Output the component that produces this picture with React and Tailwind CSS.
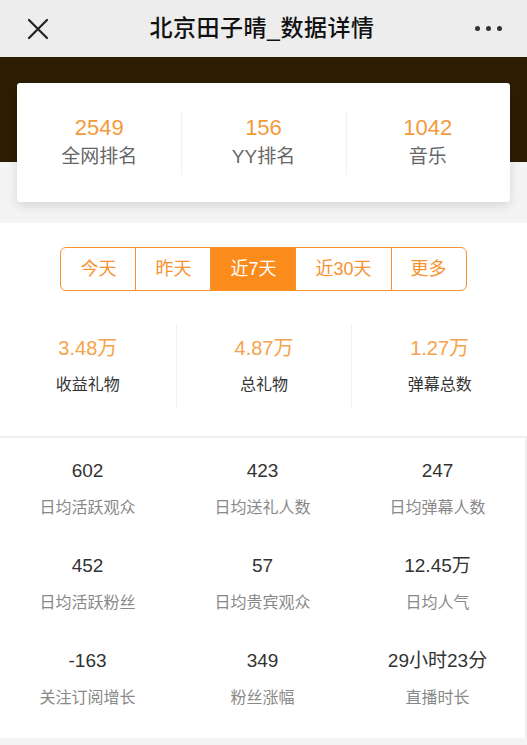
import React from "react";

const ranks = [
  { value: "2549", label: "全网排名" },
  { value: "156", label: "YY排名" },
  { value: "1042", label: "音乐" },
];

const tabs = ["今天", "昨天", "近7天", "近30天", "更多"];

const gifts = [
  { value: "3.48万", label: "收益礼物" },
  { value: "4.87万", label: "总礼物" },
  { value: "1.27万", label: "弹幕总数" },
];

const daily = [
  { value: "602", label: "日均活跃观众" },
  { value: "423", label: "日均送礼人数" },
  { value: "247", label: "日均弹幕人数" },
  { value: "452", label: "日均活跃粉丝" },
  { value: "57", label: "日均贵宾观众" },
  { value: "12.45万", label: "日均人气" },
  { value: "-163", label: "关注订阅增长" },
  { value: "349", label: "粉丝涨幅" },
  { value: "29小时23分", label: "直播时长" },
];

export default function App() {
  return (
    <div
      className="w-[527px] h-[745px] overflow-hidden bg-[#f4f4f4] flex flex-col"
      style={{ fontFamily: '"Liberation Sans", "Noto Sans CJK SC", sans-serif' }}
    >
      {/* Header */}
      <div className="h-[57px] bg-[#ededed] flex items-center justify-between px-[27px] shrink-0">
        <svg width="22" height="22" viewBox="0 0 22 22" className="text-[#222]">
          <path d="M2 2 L20 20 M20 2 L2 20" stroke="currentColor" strokeWidth="2.2" strokeLinecap="round" />
        </svg>
        <h1 className="text-[23px] font-medium text-[#111] tracking-[0.5px]">北京田子晴_数据详情</h1>
        <div className="flex items-center gap-[6px] mr-[-2px]">
          <span className="w-[5px] h-[5px] rounded-full bg-[#333]"></span>
          <span className="w-[5px] h-[5px] rounded-full bg-[#333]"></span>
          <span className="w-[5px] h-[5px] rounded-full bg-[#333]"></span>
        </div>
      </div>

      {/* Rank card over dark band */}
      <div className="bg-[linear-gradient(to_bottom,#2c1d04_105px,#f4f4f4_105px)] pt-[26px] pb-[21px] px-[17px] shrink-0">
        <div className="h-[119px] bg-white rounded-[3px] shadow-[0_4px_12px_rgba(0,0,0,0.12)] grid grid-cols-3 items-center">
          {ranks.map((r, i) => (
            <div key={r.label} className="relative flex flex-col items-center">
              {i > 0 && <div className="absolute left-0 top-1/2 -translate-y-1/2 w-px h-[62px] bg-[#f1f1f1]"></div>}
              <div className="text-[22px] leading-[28px] text-[#f39a3c]">{r.value}</div>
              <div className="text-[19px] leading-[28px] text-[#666] mt-[1px]">{r.label}</div>
            </div>
          ))}
        </div>
      </div>

      {/* Tabs + gift stats */}
      <div className="bg-white pt-[24px] pb-[28px] border-b-2 border-[#efefef] shrink-0">
        <div className="flex justify-center">
          <div className="flex h-[44px] border border-[#f7922e] rounded-[6px] overflow-hidden">
            {tabs.map((t, i) => (
              <div
                key={t}
                className={
                  "flex items-center justify-center text-[18px] px-[19px] " +
                  (i > 0 ? "border-l border-[#f7922e] " : "") +
                  (t === "近7天" ? "bg-[#fb8c1c] text-white" : "text-[#f7922e]")
                }
              >
                {t}
              </div>
            ))}
          </div>
        </div>
        <div className="grid grid-cols-3 mt-[33px]">
          {gifts.map((g, i) => (
            <div key={g.label} className={"h-[84px] flex flex-col items-center justify-center " + (i > 0 ? "border-l border-[#f0f0f0]" : "")}>
              <div className="text-[20px] leading-[26px] text-[#f5a24a]">{g.value}</div>
              <div className="text-[16px] leading-[24px] text-[#333] mt-[12px]">{g.label}</div>
            </div>
          ))}
        </div>
      </div>

      {/* Daily stats */}
      <div className="bg-white h-[300px] border-r-2 border-[#f0f0f0] shrink-0 grid grid-cols-3 content-start pt-[21px]">
        {daily.map((d) => (
          <div key={d.label} className="h-[95px] flex flex-col items-center">
            <div className="text-[19px] leading-[24px] text-[#333]">{d.value}</div>
            <div className="text-[16px] leading-[22px] text-[#888] mt-[14px]">{d.label}</div>
          </div>
        ))}
      </div>
    </div>
  );
}
